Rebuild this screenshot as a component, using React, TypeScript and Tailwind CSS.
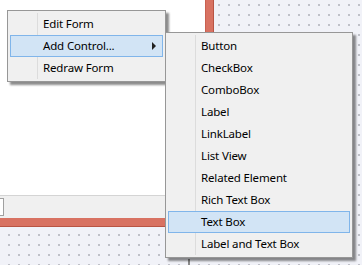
const font = { fontFamily: '"Segoe UI", "Noto Sans", "Open Sans", sans-serif' };

type Item = { label: string; active?: boolean; sub?: boolean };

const mainItems: Item[] = [
  { label: 'Edit Form' },
  { label: 'Add Control...', active: true, sub: true },
  { label: 'Redraw Form' },
];

const controlItems: Item[] = [
  { label: 'Button' },
  { label: 'CheckBox' },
  { label: 'ComboBox' },
  { label: 'Label' },
  { label: 'LinkLabel' },
  { label: 'List View' },
  { label: 'Related Element' },
  { label: 'Rich Text Box' },
  { label: 'Text Box', active: true },
  { label: 'Label and Text Box' },
];

function MenuRow({ item }: { item: Item }) {
  return (
    <div
      className={
        'flex h-[22px] items-center border pl-[32px] ' +
        (item.active ? 'border-[#80b5ea] bg-[#d2e4f5]' : 'border-transparent')
      }
    >
      <span className="text-[11.5px] leading-none tracking-[-0.15px] text-black">{item.label}</span>
      {item.sub && (
        <span className="ml-auto mr-[6px] h-0 w-0 border-y-[4px] border-l-[4px] border-y-transparent border-l-[#202020]" />
      )}
    </div>
  );
}

// popup menu, floating over the designer
function Menu({ items, className }: { items: Item[]; className: string }) {
  return (
    <div
      className={
        'absolute border border-[#979797] bg-[#f0f0f0] p-[2px] shadow-[3px_3px_2px_rgba(0,0,0,0.45)] ' + className
      }
    >
      <div className="absolute top-[2px] bottom-[2px] left-[29px] w-[1px] bg-[#dcdcdc]" />
      <div className="relative flex flex-col">
        {items.map((it) => (
          <MenuRow key={it.label} item={it} />
        ))}
      </div>
    </div>
  );
}

export default function App() {
  return (
    <div
      className="relative h-[265px] w-[362px] overflow-hidden bg-[#f1f2f8]"
      style={{
        ...font,
        backgroundImage: 'radial-gradient(circle, #a4a6ae 0.6px, transparent 0.9px)',
        backgroundSize: '10px 10px',
        backgroundPosition: '4px 0px',
      }}
    >
      {/* designer form with its red selection frame */}
      <div className="w-[214px] border-r border-b border-[#b85444]">
        <div className="flex h-[226px] flex-col border-r-[7px] border-b-[8px] border-[#d87262]">
          <div className="h-[195px] border-r border-[#c86050] bg-white" />
          <div className="flex h-[23px] items-center border-t border-[#d4d4d4] bg-[#f0f0f0]">
            <div className="h-[18px] w-[4px] border-y border-r border-[#a0a0a0] bg-white" />
          </div>
        </div>
      </div>
      <div className="absolute left-[188px] top-[259px] h-[6px] w-[2px] bg-[#8a8a8a]" />

      <Menu items={mainItems} className="left-[7px] top-[10px] w-[159px]" />
      <Menu items={controlItems} className="left-[165px] top-[32px] w-[188px]" />
    </div>
  );
}
